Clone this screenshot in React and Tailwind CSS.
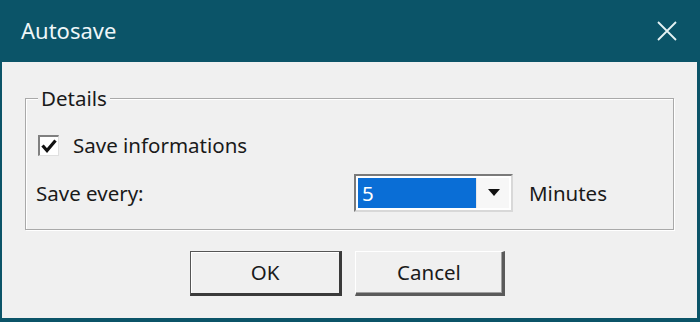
export default function App() {
  const font = { fontFamily: '"Noto Sans", "Open Sans", sans-serif' };
  return (
    <div className="w-[700px] h-[322px] bg-[#0b5468] flex flex-col overflow-hidden" style={font}>
      <div className="h-[62px] shrink-0 flex items-center justify-between pl-[21px] pr-[22px]">
        <span className="text-[22px] text-[#eef6f8] leading-none pb-[3px]">Autosave</span>
        <svg width="22" height="22" viewBox="0 0 22 22">
          <path d="M2 2 L20 20 M20 2 L2 20" stroke="#e6f2f4" strokeWidth="1.8" />
        </svg>
      </div>
      <div className="flex-1 ml-[2px] mr-[3px] mb-[4px] bg-[#f0f0f0] flex flex-col pt-[36px] px-[23px]">
        <div className="relative border border-[#a9a9a9] shadow-[inset_1px_1px_0_#fff,1px_1px_0_#fff] h-[132px] flex flex-col pl-[12px] pt-[36px]">
          <span className="absolute left-[12px] top-[-15px] bg-[#f0f0f0] px-[3px] text-[20.5px] leading-[28px] text-[#1a1a1a]">Details</span>
          <div className="flex items-center gap-[14px]">
            <div className="w-[21px] h-[21px] bg-white border-t-2 border-l-2 border-t-[#808080] border-l-[#808080] border-b border-r border-b-[#e0e0e0] border-r-[#e0e0e0] flex items-center justify-center">
              <svg width="16" height="14" viewBox="0 0 16 14">
                <path d="M1.5 6.5 L6 11.5 L14.5 1.5" stroke="#111" strokeWidth="3.2" fill="none" />
              </svg>
            </div>
            <span className="text-[20.5px] text-[#1a1a1a] leading-none">Save informations</span>
          </div>
          <div className="flex items-center mt-[18px] -ml-[2px]">
            <span className="w-[318px] text-[20.5px] text-[#1a1a1a] leading-none">Save every:</span>
            <div className="w-[159px] h-[38px] bg-white border-t-2 border-l-2 border-t-[#7a7a7a] border-l-[#7a7a7a] border-b-2 border-r-2 border-b-[#d8d8d8] border-r-[#d8d8d8] flex p-[2px]">
              <div className="w-[118px] h-full bg-[#0a6ed6] flex items-center pl-[4px] text-[20.5px] text-white leading-none">5</div>
              <div className="flex-1 flex items-center justify-center border-l border-[#e8e8e8] bg-[#f7f7f7] pl-[1px]">
                <svg width="12" height="8" viewBox="0 0 12 8">
                  <path d="M0 0 L12 0 L6 7 Z" fill="#111" />
                </svg>
              </div>
            </div>
            <span className="ml-[16px] text-[20.5px] text-[#1a1a1a] leading-none">Minutes</span>
          </div>
        </div>
        <div className="flex gap-[13px] mt-[21px] ml-[165px]">
          <button className="w-[152px] h-[45px] bg-[#f0f0f0] border border-[#555] border-b-[3px] border-r-[3px] border-b-[#3a3a3a] border-r-[#3a3a3a] shadow-[inset_1px_1px_0_#fff] text-[20.5px] text-[#1a1a1a] flex items-center justify-center">OK</button>
          <button className="w-[150px] h-[45px] bg-[#f0f0f0] border-t border-l border-t-[#fff] border-l-[#fff] border-b-[3px] border-r-[3px] border-b-[#5a5a5a] border-r-[#5a5a5a] shadow-[inset_-1px_-1px_0_#a0a0a0] text-[20.5px] text-[#1a1a1a] flex items-center justify-center">Cancel</button>
        </div>
      </div>
    </div>
  );
}
